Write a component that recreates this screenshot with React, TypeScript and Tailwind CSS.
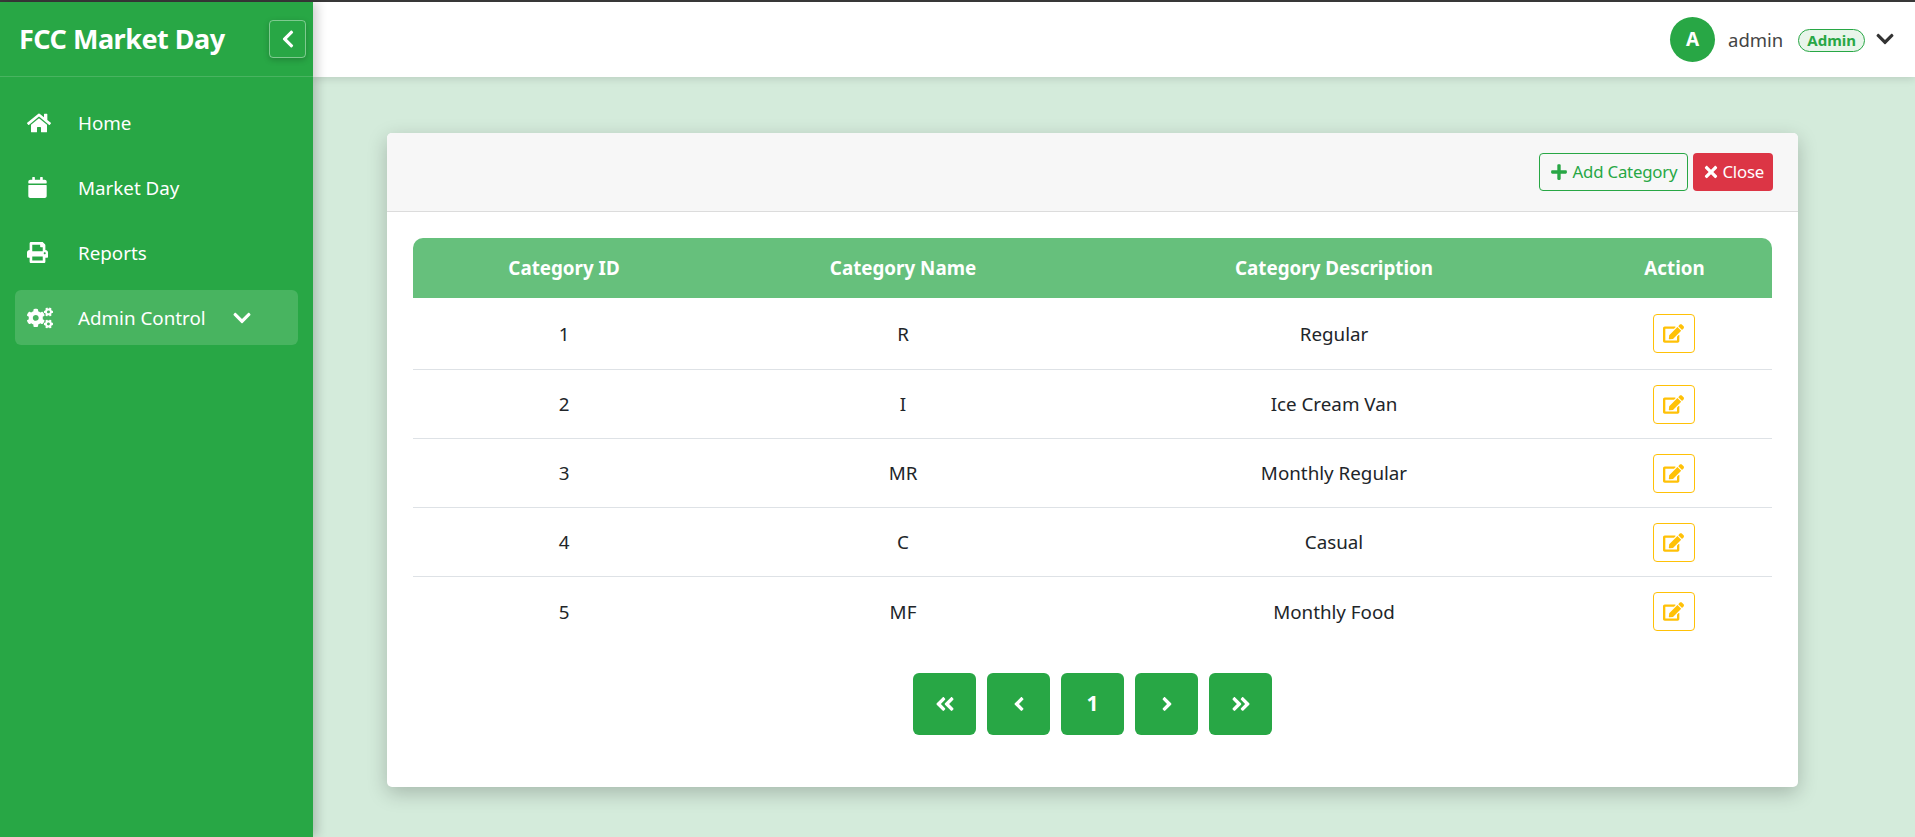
import {
  FaAngleDoubleLeft,
  FaAngleDoubleRight,
  FaAngleLeft,
  FaAngleRight,
  FaCalendar,
  FaChevronDown,
  FaChevronLeft,
  FaCogs,
  FaEdit,
  FaHome,
  FaPlus,
  FaPrint,
  FaTimes,
} from "react-icons/fa";

const categories = [
  { id: 1, name: "R", description: "Regular" },
  { id: 2, name: "I", description: "Ice Cream Van" },
  { id: 3, name: "MR", description: "Monthly Regular" },
  { id: 4, name: "C", description: "Casual" },
  { id: 5, name: "MF", description: "Monthly Food" },
];

const navItems = [
  { label: "Home", icon: <FaHome className="text-[24px]" /> },
  { label: "Market Day", icon: <FaCalendar className="text-[21px]" /> },
  { label: "Reports", icon: <FaPrint className="text-[21px]" /> },
];

export default function App() {
  return (
    <div className="flex h-[837px] flex-col overflow-hidden bg-[#d4ebdb] font-['Noto_Sans',sans-serif] text-[#212529]">
      <div className="h-[2px] shrink-0 bg-[#3a3a3a]" />
      <div className="flex min-h-0 flex-1">
        {/* Sidebar */}
        <aside className="z-20 w-[313px] shrink-0 bg-[#28a745] text-white shadow-[4px_0_10px_rgba(0,0,0,0.2)]">
          <div className="flex h-[75px] items-center justify-between border-b border-white/15 pr-[7px] pl-[19px]">
            <span className="mt-[1px] text-[27px] font-bold tracking-[-0.5px]">FCC Market Day</span>
            <button className="flex h-[38px] w-[37px] items-center justify-center rounded-[4px] border border-white/40 shadow-[0_2px_6px_rgba(0,0,0,0.2)]">
              <FaChevronLeft className="text-[20px]" />
            </button>
          </div>
          <nav className="flex flex-col gap-[10px] px-[15px] pt-[18px]">
            {navItems.map((item) => (
              <div key={item.label} className="flex h-[55px] items-center rounded-[6px] pl-[12px]">
                <span className="flex w-[51px] shrink-0 items-center">{item.icon}</span>
                <span className="mt-[1px] text-[18.8px]">{item.label}</span>
              </div>
            ))}
            <div className="flex h-[55px] items-center rounded-[6px] bg-white/15 pl-[12px]">
              <span className="flex w-[51px] shrink-0 items-center">
                <FaCogs className="text-[26px]" />
              </span>
              <span className="mt-[1px] text-[18.8px]">Admin Control</span>
              <FaChevronDown className="ml-[26px] text-[20px]" />
            </div>
          </nav>
        </aside>

        {/* Main column */}
        <div className="flex min-w-0 flex-1 flex-col">
          <header className="z-10 flex h-[75px] shrink-0 items-center justify-end bg-white pr-[20px] shadow-[0_2px_8px_rgba(0,0,0,0.12)]">
            <div className="flex h-[45px] w-[45px] items-center justify-center rounded-full bg-[#28a745] text-[19px] font-bold text-white">
              A
            </div>
            <span className="mt-[1px] ml-[13px] text-[18.5px] text-[#444]">admin</span>
            <span className="mt-[1px] ml-[15px] flex h-[23px] items-center rounded-full border border-[#28a745] bg-[#e8f5ea] px-[8px] text-[15px] font-bold text-[#28a745]">
              Admin
            </span>
            <FaChevronDown className="mb-[2px] ml-[10px] text-[20px] text-[#333]" />
          </header>

          <main className="flex-1 pt-[56px] pl-[74px]">
            <section className="h-[654px] w-[1411px] overflow-hidden rounded-[5px] bg-white shadow-[0_6px_20px_rgba(0,0,0,0.22)]">
              <div className="flex h-[79px] items-center justify-end gap-[5px] border-b border-[#dcdcdc] bg-[#f7f7f7] pr-[25px]">
                <button className="flex h-[38px] items-center gap-[5px] rounded-[4px] border border-[#28a745] px-[10px] text-[16.8px] tracking-[-0.2px] text-[#28a745]">
                  <FaPlus className="text-[18px]" />
                  Add Category
                </button>
                <button className="flex h-[38px] items-center gap-[2px] rounded-[4px] bg-[#dc3545] px-[9px] text-[16.8px] tracking-[-0.2px] text-white">
                  <FaTimes className="text-[18px]" />
                  Close
                </button>
              </div>

              <div className="px-[26px] pt-[26px]">
                <table className="w-[1359px] table-fixed border-collapse text-[18.8px]">
                  <colgroup>
                    <col className="w-[302px]" />
                    <col className="w-[376px]" />
                    <col className="w-[486px]" />
                    <col className="w-[195px]" />
                  </colgroup>
                  <thead>
                    <tr className="h-[60px] bg-[#66c07c] font-bold text-white">
                      <th className="rounded-tl-[10px] font-bold">Category ID</th>
                      <th className="font-bold">Category Name</th>
                      <th className="font-bold">Category Description</th>
                      <th className="rounded-tr-[10px] font-bold">Action</th>
                    </tr>
                  </thead>
                  <tbody>
                    {categories.map((category) => (
                      <tr
                        key={category.id}
                        className="h-[69px] border-b border-[#dee2e6] text-center first:h-[71px] last:border-b-0"
                      >
                        <td className="pt-[2px]">{category.id}</td>
                        <td className="pt-[2px]">{category.name}</td>
                        <td className="pt-[2px]">{category.description}</td>
                        <td className="pt-[1px] pr-[2px]">
                          <button className="inline-flex h-[39px] w-[42px] items-center justify-center rounded-[4px] border border-[#ffc107] align-middle text-[#ffc107]">
                            <FaEdit className="text-[21px]" />
                          </button>
                        </td>
                      </tr>
                    ))}
                  </tbody>
                </table>

                <div className="mt-[28px] flex justify-center gap-[11px]">
                  <PageButton>
                    <FaAngleDoubleLeft className="text-[22px]" />
                  </PageButton>
                  <PageButton>
                    <FaAngleLeft className="text-[22px]" />
                  </PageButton>
                  <PageButton>
                    <span className="text-[21px] font-bold">1</span>
                  </PageButton>
                  <PageButton>
                    <FaAngleRight className="text-[22px]" />
                  </PageButton>
                  <PageButton>
                    <FaAngleDoubleRight className="text-[22px]" />
                  </PageButton>
                </div>
              </div>
            </section>
          </main>
        </div>
      </div>
    </div>
  );
}

function PageButton({ children }: { children: React.ReactNode }) {
  return (
    <button className="flex h-[62px] w-[63px] items-center justify-center rounded-[6px] bg-[#28a745] text-white">
      {children}
    </button>
  );
}
